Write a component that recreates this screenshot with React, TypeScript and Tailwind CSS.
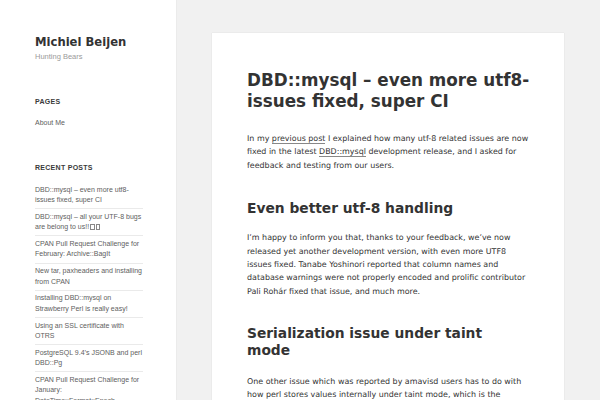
import React from "react";

const posts: React.ReactNode[] = [
  "DBD::mysql – even more utf8-issues fixed, super CI",
  <>
    DBD::mysql – all your UTF-8 bugs are belong to us!!
    <span className="inline-block w-[4.5px] h-[6.5px] border border-[#888] ml-[1px] align-[-1px]" />
    <span className="inline-block w-[4.5px] h-[6.5px] border border-[#888] ml-[1px] align-[-1px]" />
  </>,
  "CPAN Pull Request Challenge for February: Archive::BagIt",
  "New tar, paxheaders and installing from CPAN",
  "Installing DBD::mysql on Strawberry Perl is really easy!",
  "Using an SSL certificate with OTRS",
  "PostgreSQL 9.4’s JSONB and perl DBD::Pg",
  "CPAN Pull Request Challenge for January: DateTime::Format::Epoch",
];

export default function App() {
  return (
    <div className="flex h-[400px] w-[600px] overflow-hidden bg-[#f1f1f1]">
      <aside className="w-[176px] shrink-0 bg-white pl-[35px] pr-[33px] pt-[35px] shadow-[0_0_1px_rgba(0,0,0,0.15)]">
        <h1 className="font-['DejaVu_Sans',sans-serif] text-[11.6px] leading-[14px] font-bold text-[#333]">
          Michiel Beijen
        </h1>
        <p className="mt-[3px] font-['Liberation_Sans',sans-serif] text-[7.5px] leading-[10px] text-[#9a9a9a]">
          Hunting Bears
        </p>
        <div className="font-['Liberation_Sans',sans-serif] text-[#606060]">
          <h2 className="mt-[35px] text-[7px] leading-[10px] font-bold tracking-[0.04em] text-[#3a3a3a]">PAGES</h2>
          <ul className="mt-[8.75px]">
            <li className="py-[2.5px] text-[7px] leading-[10.5px]">About Me</li>
          </ul>
          <h2 className="mt-[32px] text-[7px] leading-[10px] font-bold tracking-[0.04em] text-[#3a3a3a]">
            RECENT POSTS
          </h2>
          <ul className="mt-[8.75px]">
            {posts.map((p, i) => (
              <li
                key={i}
                className={
                  "py-[2.6px] text-[7px] leading-[10.5px] " + (i > 0 ? "border-t border-[#eaeaea]" : "")
                }
              >
                {p}
              </li>
            ))}
          </ul>
        </div>
      </aside>
      <main className="ml-[36px] mt-[33px] w-[352px] shrink-0 self-start bg-white pl-[35px] pt-[37px] pb-10 shadow-[0_0_1px_rgba(0,0,0,0.15)] font-['DejaVu_Sans',sans-serif] text-[#333]">
        <div className="w-[284px]">
          <h1 className="text-[16.8px] leading-[21px] font-bold whitespace-nowrap">
            DBD::mysql – even more utf8-
            <br />
            issues fixed, super CI
          </h1>
          <p className="mt-[20px] text-[7.95px] leading-[13.3px]">
            In my <span className="border-b border-[#888]">previous post</span> I explained how many utf-8 related
            issues are now fixed in the latest <span className="border-b border-[#888]">DBD::mysql</span> development
            release, and I asked for feedback and testing from our users.
          </p>
          <h2 className="mt-[28px] text-[13.8px] leading-[17.5px] font-bold">Even better utf-8 handling</h2>
          <p className="mt-[14px] text-[7.95px] leading-[13.3px]">
            I’m happy to inform you that, thanks to your feedback, we’ve now released yet another development
            version, with even more UTF8 issues fixed. Tanabe Yoshinori reported that column names and database
            warnings were not properly encoded and prolific contributor Pali Rohár fixed that issue, and much more.
          </p>
          <h2 className="mt-[27px] text-[13.8px] leading-[17.5px] font-bold">
            Serialization issue under taint
            <br />
            mode
          </h2>
          <p className="mt-[15px] w-[278px] text-[7.95px] leading-[13.3px]">
            One other issue which was reported by amavisd users has to do with how perl stores values internally
            under taint mode, which is the default mode for amavisd. This was fixed as well.
          </p>
        </div>
      </main>
    </div>
  );
}
